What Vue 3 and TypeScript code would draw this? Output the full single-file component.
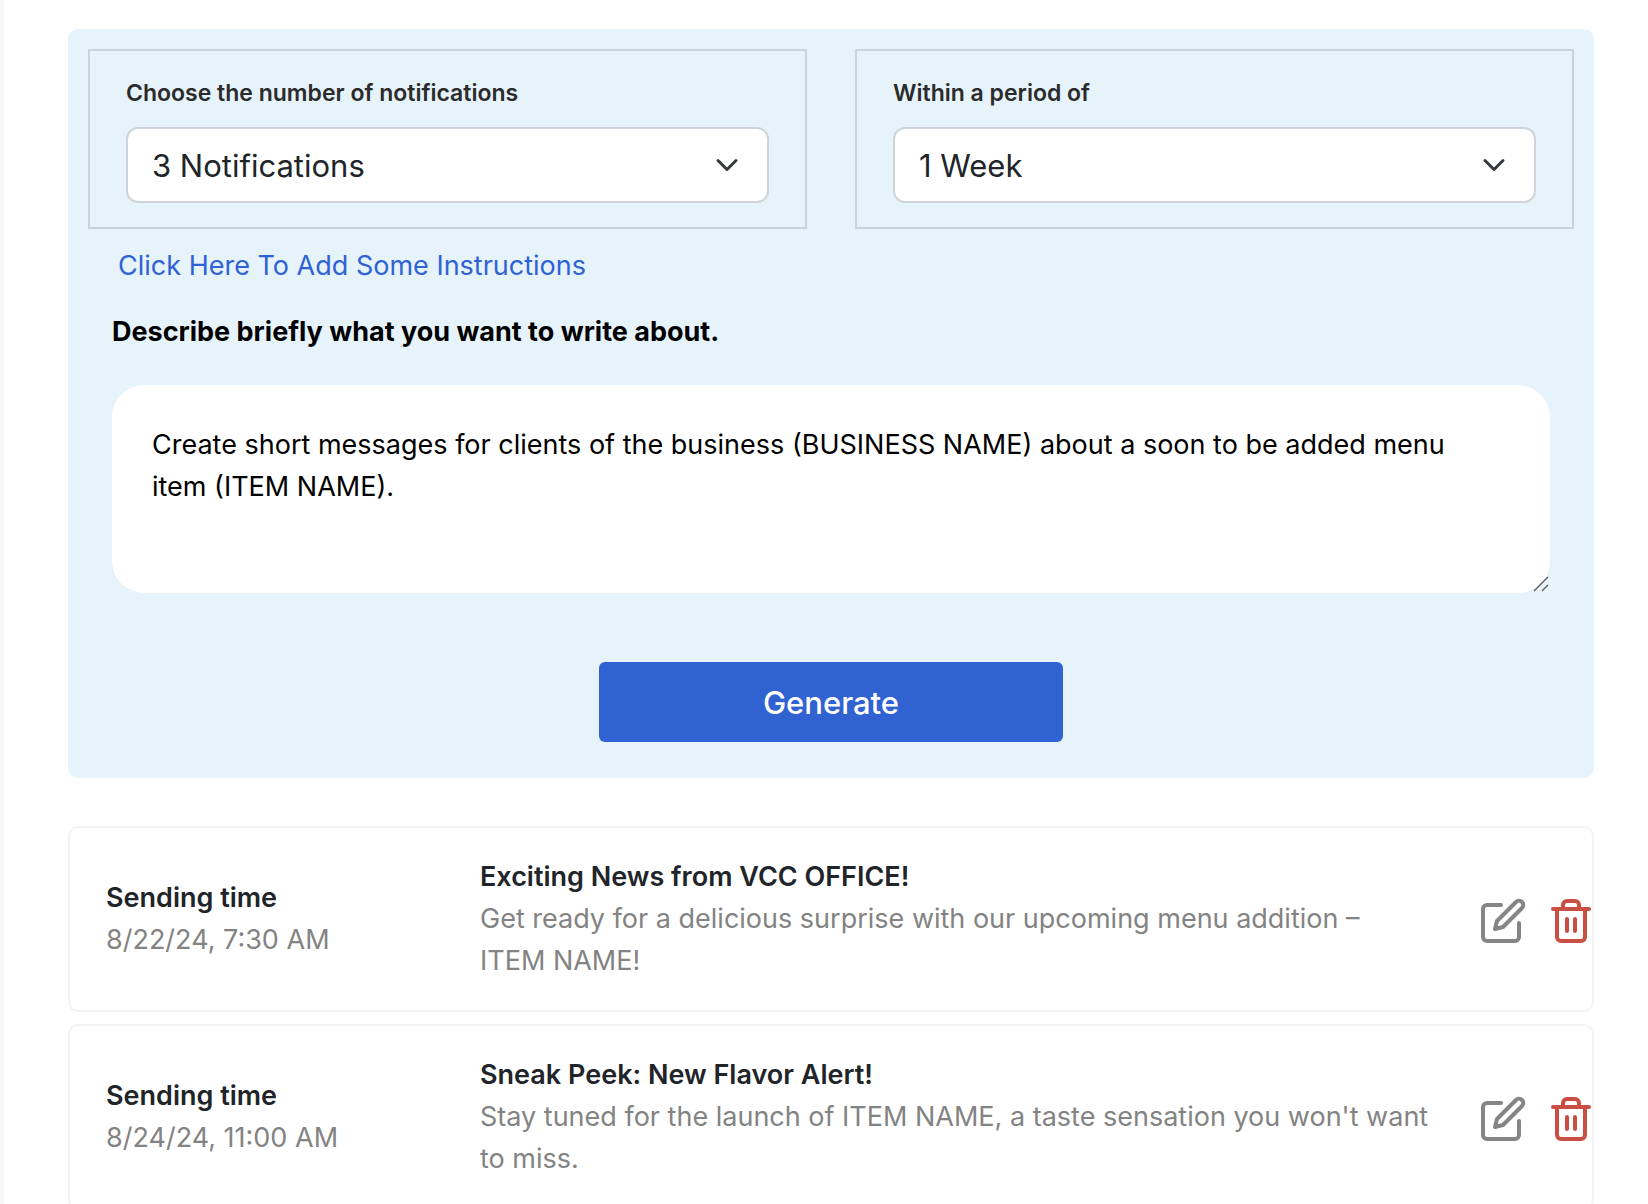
<script setup lang="ts">
import { ref } from 'vue'

interface Notice {
  id: number
  time: string
  title: string
  body: string
}

const count = ref('3 Notifications')
const period = ref('1 Week')
const prompt = ref(
  'Create short messages for clients of the business (BUSINESS NAME) about a soon to be added menu item (ITEM NAME).'
)

const counts: string[] = ['1 Notification', '2 Notifications', '3 Notifications']
const periods: string[] = ['1 Week', '2 Weeks', '1 Month']

const notices: Notice[] = [
  {
    id: 1,
    time: '8/22/24, 7:30 AM',
    title: 'Exciting News from VCC OFFICE!',
    body: 'Get ready for a delicious surprise with our upcoming menu addition – ITEM NAME!'
  },
  {
    id: 2,
    time: '8/24/24, 11:00 AM',
    title: 'Sneak Peek: New Flavor Alert!',
    body: "Stay tuned for the launch of ITEM NAME, a taste sensation you won't want to miss."
  }
]
</script>

<template>
  <main class="page">
    <form class="panel" @submit.prevent>
      <div class="options">
        <div class="option">
          <label for="count">Choose the number of notifications</label>
          <select id="count" v-model="count">
            <option v-for="c in counts" :key="c">{{ c }}</option>
          </select>
        </div>
        <div class="option">
          <label for="period">Within a period of</label>
          <select id="period" v-model="period">
            <option v-for="p in periods" :key="p">{{ p }}</option>
          </select>
        </div>
      </div>
      <a class="instructions" href="#instructions">Click Here To Add Some Instructions</a>
      <div class="describe">
        <label for="prompt">Describe briefly what you want to write about.</label>
        <div class="prompt-box">
          <textarea id="prompt" v-model="prompt"></textarea>
          <svg class="grip" viewBox="0 0 16 16" aria-hidden="true">
            <path d="M2 16 16 2M10 16l6-6" stroke="#fff" />
            <path d="M1 15 15 1M9 15l6-6" stroke="#555a5e" stroke-width="1.4" />
          </svg>
        </div>
      </div>
      <button class="generate" type="submit">Generate</button>
    </form>

    <ul class="notices">
      <li v-for="n in notices" :key="n.id" class="notice">
        <div class="when">
          <strong>Sending time</strong>
          <span>{{ n.time }}</span>
        </div>
        <div class="message">
          <strong>{{ n.title }}</strong>
          <span>{{ n.body }}</span>
        </div>
        <div class="actions">
          <button class="edit" type="button" aria-label="Edit">
            <svg viewBox="0 0 24 24">
              <path d="M11 4H4a2 2 0 0 0-2 2v14a2 2 0 0 0 2 2h14a2 2 0 0 0 2-2v-7" />
              <path d="M18.5 2.5a2.121 2.121 0 0 1 3 3L12 15l-4 1 1-4 9.5-9.5z" />
            </svg>
          </button>
          <button class="delete" type="button" aria-label="Delete">
            <svg viewBox="0 0 24 24">
              <path d="M3 6h18" />
              <path d="M19 6v14a2 2 0 0 1-2 2H7a2 2 0 0 1-2-2V6m3 0V4a2 2 0 0 1 2-2h4a2 2 0 0 1 2 2v2" />
              <path d="M10 11v6M14 11v6" />
            </svg>
          </button>
        </div>
      </li>
    </ul>
  </main>
</template>

<style>
body {
  background: #fff;
  overflow: hidden;
}
</style>

<style scoped>
.page {
  box-sizing: border-box;
  min-height: 100vh;
  padding: 29px 54px 0 64px;
  border-left: 4px solid #f8f8f8;
  font-family: Inter, 'Liberation Sans', sans-serif;
  font-size: 27px;
  line-height: 42px;
  color: #212529;
}

.panel {
  display: flex;
  flex-direction: column;
  padding: 20px 20px 36px;
  border-radius: 10px;
  background: #e6f3fb;
}

.options {
  display: grid;
  grid-template-columns: 1fr 1fr;
  gap: 48px;
}

.option {
  display: flex;
  flex-direction: column;
  gap: 16px;
  padding: 24px 36px;
  border: 2px solid #c8d4dc;
}

.option label {
  font-size: 23px;
  line-height: 36px;
  font-weight: 600;
  color: #2b2b2b;
}

select {
  appearance: none;
  box-sizing: border-box;
  width: 100%;
  height: 76px;
  padding: 0 72px 0 24px;
  border: 2px solid #ced4da;
  border-radius: 12px;
  background: #fff
    url("data:image/svg+xml,%3Csvg xmlns='http://www.w3.org/2000/svg' viewBox='0 0 16 16'%3E%3Cpath fill='none' stroke='%23343a40' stroke-linecap='round' stroke-linejoin='round' stroke-width='2' d='m2 5 6 6 6-6'/%3E%3C/svg%3E")
    no-repeat right 24px center / 32px 24px;
  font-family: inherit;
  font-size: 31px;
  color: #212529;
}

.instructions {
  align-self: flex-start;
  margin: 16px 28px 0 30px;
  color: #2f62d6;
  text-decoration: none;
}

.describe {
  display: flex;
  flex-direction: column;
  gap: 32px;
  margin: 24px 24px 0;
}

.describe label {
  font-weight: 700;
  color: #000;
}

.prompt-box {
  position: relative;
  display: flex;
}

textarea {
  box-sizing: border-box;
  width: 100%;
  height: 208px;
  padding: 39px 56px 38px 40px;
  border: 0;
  border-radius: 32px;
  background: #fff;
  resize: none;
  font: inherit;
  color: #000;
}

.grip {
  position: absolute;
  right: 1px;
  bottom: 1px;
  width: 16px;
  height: 16px;
  pointer-events: none;
}

.generate {
  align-self: center;
  width: 464px;
  height: 80px;
  margin-top: 69px;
  border: 0;
  border-radius: 6px;
  background: #3062d2;
  font-family: inherit;
  font-size: 31px;
  font-weight: 500;
  color: #fff;
}

.notices {
  display: flex;
  flex-direction: column;
  gap: 12px;
  margin: 48px 0 0;
  padding: 0;
  list-style: none;
}

.notice {
  display: grid;
  grid-template-columns: 374px 1fr auto;
  align-items: center;
  padding: 28px 0 28px 36px;
  border: 2px solid #f3f3f3;
  border-radius: 10px;
}

.when,
.message {
  display: flex;
  flex-direction: column;
}

.when strong,
.message strong {
  font-weight: 600;
}

.when span,
.message span {
  color: #838383;
}

.actions {
  display: flex;
  gap: 20px;
  margin: 0 -3px 0 48px;
  padding-top: 4px;
}

.actions button {
  padding: 0;
  border: 0;
  background: none;
}

.actions svg {
  display: block;
  width: 48px;
  height: 48px;
  fill: none;
  stroke: currentColor;
  stroke-width: 2;
  stroke-linecap: round;
  stroke-linejoin: round;
}

.edit {
  color: #858585;
}

.delete {
  color: #c94f45;
}
</style>
